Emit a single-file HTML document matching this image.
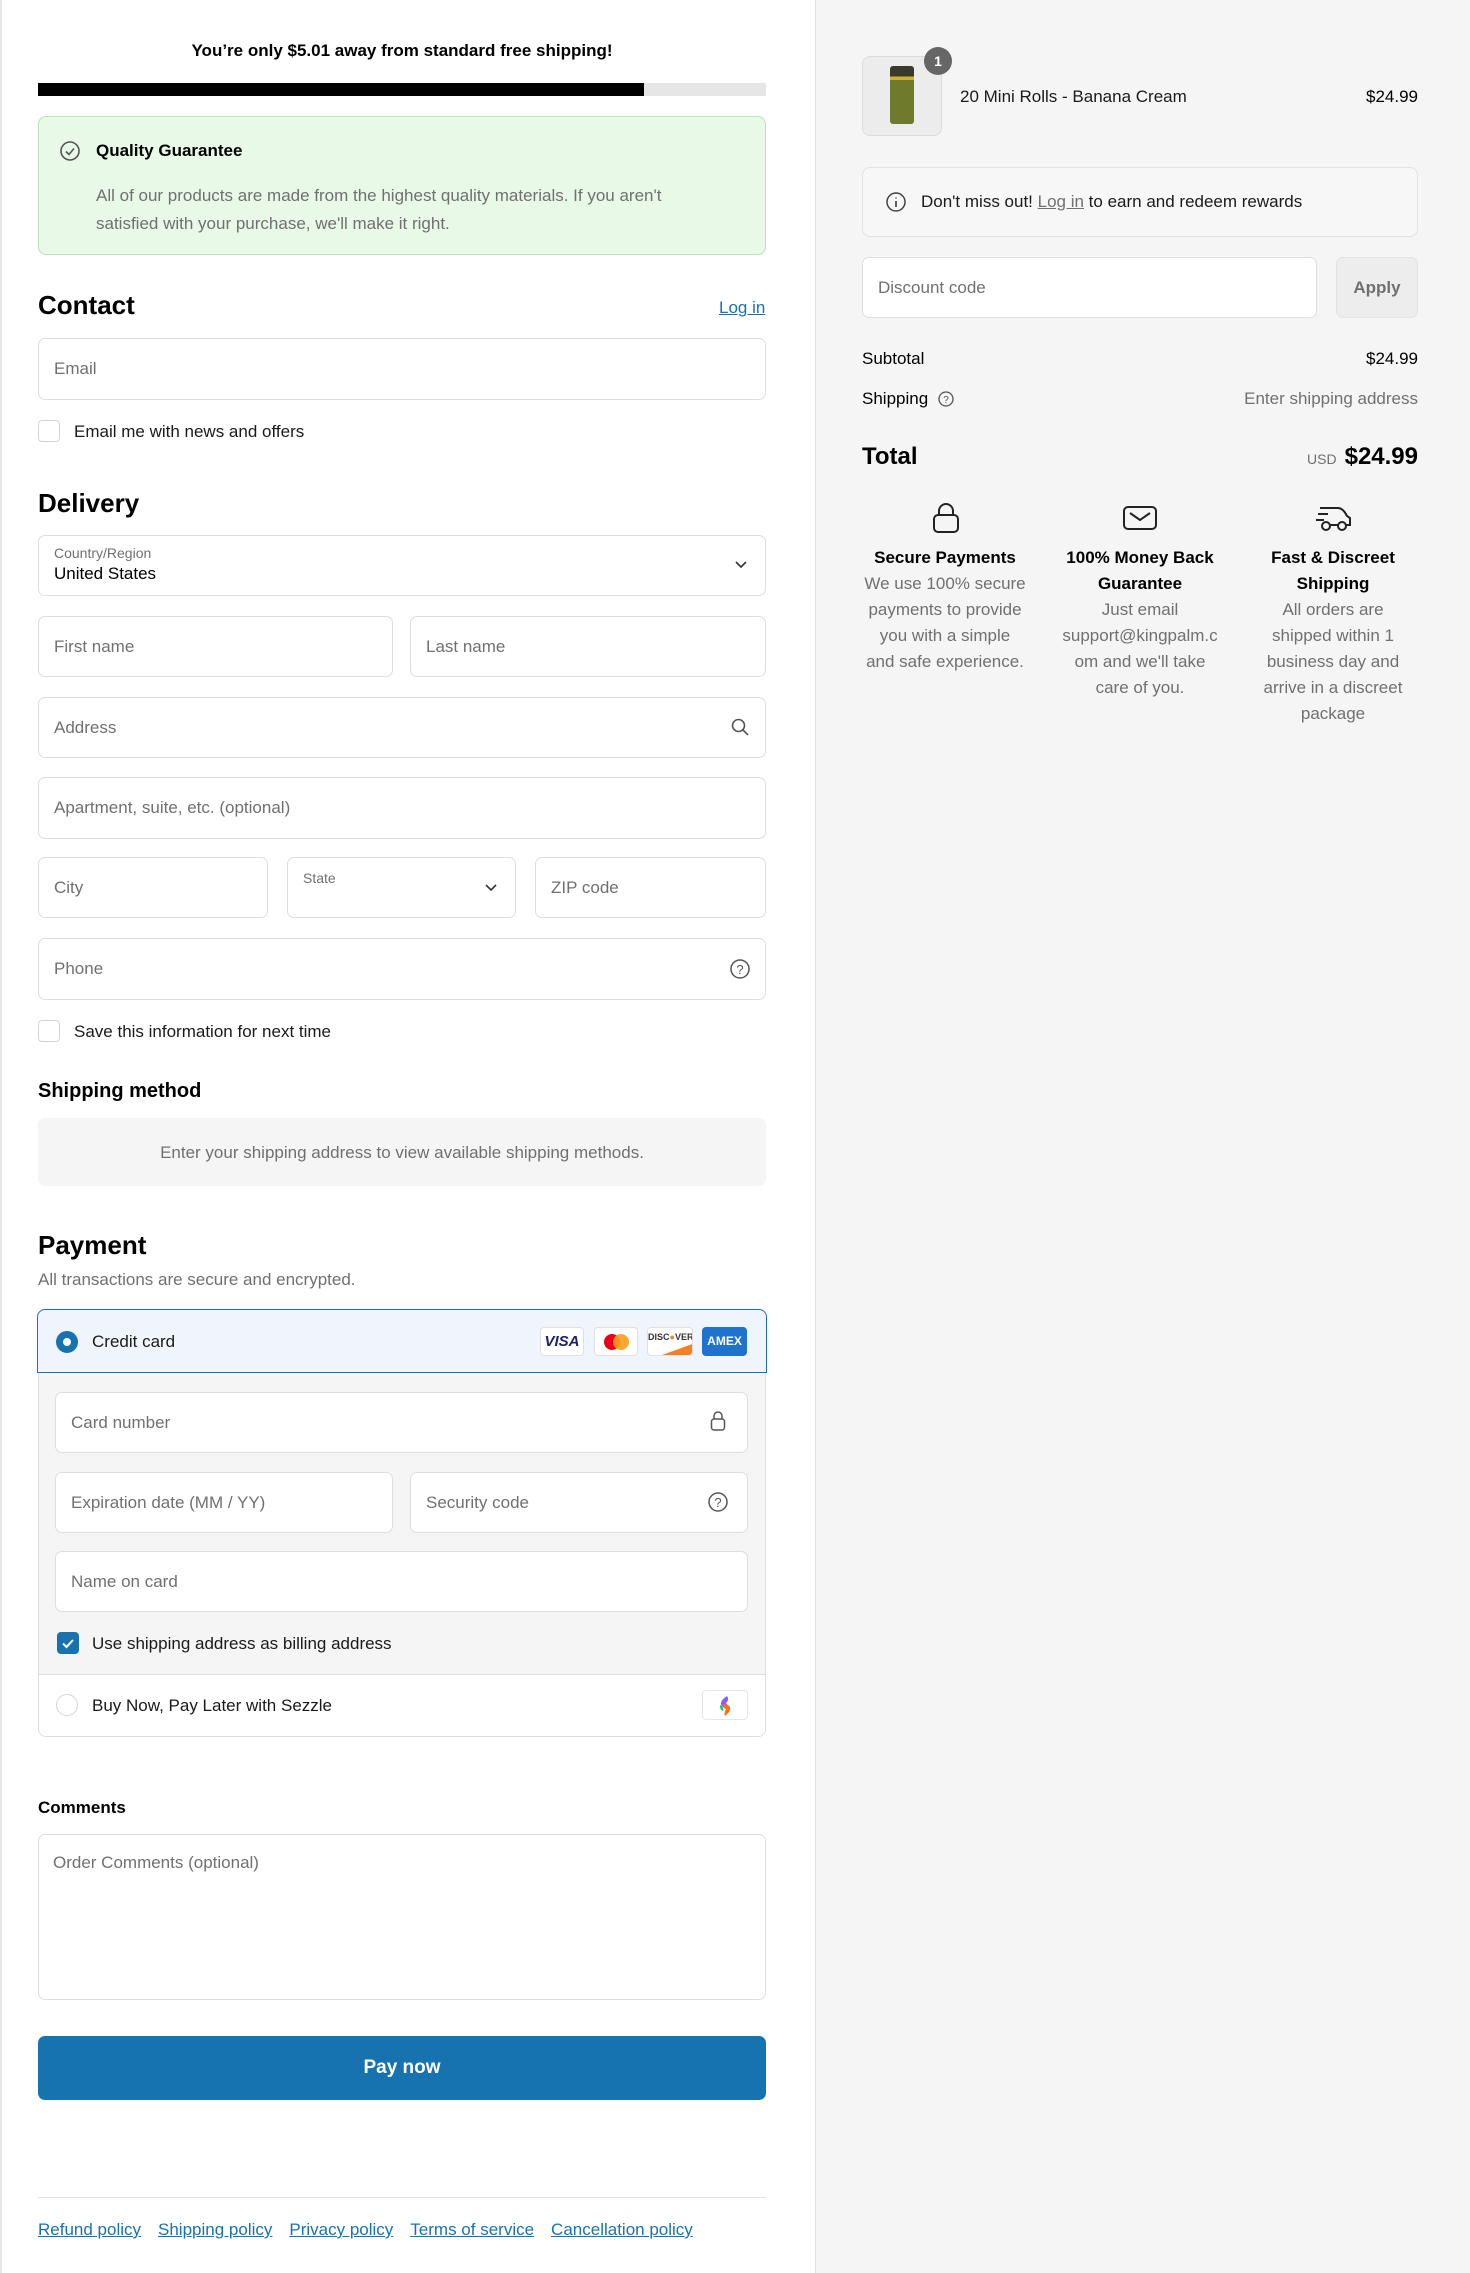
<!DOCTYPE html>
<html><head><meta charset="utf-8">
<style>
*{box-sizing:border-box;margin:0;padding:0}
body{width:1470px;height:2273px;position:relative;background:#fff;font-family:"Liberation Sans",sans-serif;color:#000;overflow:hidden}
.a{position:absolute}
.in{position:absolute;border:1px solid #dedede;border-radius:7px;background:#fff;font-size:17px;color:#707070;display:flex;align-items:center;padding-left:15px}
.lbl{position:absolute;font-size:17px;color:#1a1a1a}
.cb{position:absolute;width:22px;height:22px;border:1px solid #d4d4d4;border-radius:4px;background:#fff}
.h{position:absolute;font-size:26px;font-weight:bold;color:#000}
.lnk{color:#1773b0;text-decoration:underline}
.ic{position:absolute}
.c3{position:absolute;width:190px;text-align:center;white-space:nowrap}
.c3 b{display:block;font-size:17px;color:#000;line-height:26px}
.c3 span{display:block;font-size:17px;color:#707070;line-height:26px}
</style></head><body>
<div class="a" style="left:0;top:0;width:2px;height:2273px;background:#e8e8e8"></div>
<div class="a" style="left:815px;top:0;width:655px;height:2273px;background:#f5f5f5;border-left:1px solid #e2e2e2"></div>

<div class="a" style="left:38px;width:728px;top:41px;text-align:center;font-size:17px;font-weight:bold">You’re only $5.01 away from standard free shipping!</div>
<div class="a" style="left:38px;top:83px;width:728px;height:13px;background:#e6e6e6"></div>
<div class="a" style="left:38px;top:83px;width:606px;height:13px;background:#000"></div>

<div class="a" style="left:38px;top:116px;width:728px;height:139px;background:#e8f9e8;border:1px solid #b6e6b6;border-radius:8px"></div>
<svg class="ic" style="left:59px;top:140px" width="22" height="22" viewBox="0 0 22 22"><circle cx="11" cy="11" r="9" fill="none" stroke="#555" stroke-width="1.6"/><path d="M7 11.5l3 3 5-6" fill="none" stroke="#555" stroke-width="1.6"/></svg>
<div class="a" style="left:96px;top:141px;font-size:17px;font-weight:bold">Quality Guarantee</div>
<div class="a" style="left:96px;top:182px;width:620px;font-size:17px;line-height:28px;color:#707070">All of our products are made from the highest quality materials. If you aren't satisfied with your purchase, we'll make it right.</div>

<div class="h" style="left:38px;top:290px">Contact</div>
<div class="a lnk" style="left:719px;top:298px;font-size:17px">Log in</div>
<div class="in" style="left:38px;top:338px;width:728px;height:62px">Email</div>
<div class="cb" style="left:38px;top:420px"></div>
<div class="lbl" style="left:74px;top:422px">Email me with news and offers</div>

<div class="h" style="left:38px;top:488px">Delivery</div>
<div class="in" style="left:38px;top:535px;width:728px;height:61px;display:block;padding-top:9px"><div style="font-size:14px;color:#707070">Country/Region</div><div style="font-size:17px;color:#000;margin-top:3px">United States</div></div>
<svg class="ic" style="left:734px;top:560px" width="14" height="10"><path d="M2 2l5 5 5-5" fill="none" stroke="#333" stroke-width="1.6"/></svg>
<div class="in" style="left:38px;top:616px;width:355px;height:61px">First name</div>
<div class="in" style="left:410px;top:616px;width:356px;height:61px">Last name</div>
<div class="in" style="left:38px;top:697px;width:728px;height:61px">Address</div>
<svg class="ic" style="left:730px;top:717px" width="20" height="20"><circle cx="8.5" cy="8.5" r="6" fill="none" stroke="#555" stroke-width="1.6"/><path d="M13 13l5 5" stroke="#555" stroke-width="1.6"/></svg>
<div class="in" style="left:38px;top:777px;width:728px;height:62px">Apartment, suite, etc. (optional)</div>
<div class="in" style="left:38px;top:857px;width:230px;height:61px">City</div>
<div class="in" style="left:287px;top:857px;width:229px;height:61px;align-items:flex-start;padding-top:12px;font-size:14px">State</div>
<svg class="ic" style="left:484px;top:883px" width="14" height="10"><path d="M2 2l5 5 5-5" fill="none" stroke="#333" stroke-width="1.6"/></svg>
<div class="in" style="left:535px;top:857px;width:231px;height:61px">ZIP code</div>
<div class="in" style="left:38px;top:938px;width:728px;height:62px">Phone</div>
<svg class="ic" style="left:729px;top:958px" width="22" height="22"><circle cx="11" cy="11" r="9" fill="none" stroke="#555" stroke-width="1.5"/><text x="11" y="16" font-size="13" text-anchor="middle" fill="#555" font-family="Liberation Sans">?</text></svg>
<div class="cb" style="left:38px;top:1020px"></div>
<div class="lbl" style="left:74px;top:1022px">Save this information for next time</div>

<div class="a" style="left:38px;top:1080px;font-size:20px;font-weight:bold">Shipping method</div>
<div class="a" style="left:38px;top:1118px;width:728px;height:68px;background:#f5f5f5;border-radius:7px;text-align:center;line-height:70px;font-size:17px;color:#707070">Enter your shipping address to view available shipping methods.</div>

<div class="h" style="left:38px;top:1230px">Payment</div>
<div class="a" style="left:38px;top:1270px;font-size:17px;color:#707070">All transactions are secure and encrypted.</div>

<div class="a" style="left:38px;top:1309px;width:728px;height:428px;border:1px solid #dedede;border-radius:8px;background:#f5f5f5;overflow:hidden">
 <div class="a" style="left:0;top:364px;width:728px;height:64px;background:#fff;border-top:1px solid #dedede"></div>
</div>
<div class="a" style="left:37px;top:1309px;width:730px;height:64px;background:#f0f5fd;border:1.5px solid #1773b0;border-radius:8px 8px 0 0"></div>
<div class="a" style="left:56px;top:1331px;width:22px;height:22px;border-radius:50%;border:7px solid #1773b0;background:#fff"></div>
<div class="lbl" style="left:92px;top:1332px">Credit card</div>
<div class="a" style="left:540px;top:1327px;width:44px;height:29px;background:#fff;border:1px solid #e0e0e0;border-radius:4px;text-align:center;font:italic bold 15px/27px 'Liberation Sans';color:#1a1f71">VISA</div>
<div class="a" style="left:594px;top:1327px;width:44px;height:29px;background:#fff;border:1px solid #e0e0e0;border-radius:4px"><div class="a" style="left:9px;top:6px;width:16px;height:16px;border-radius:50%;background:#eb001b"></div><div class="a" style="left:18px;top:6px;width:16px;height:16px;border-radius:50%;background:#f79e1b;opacity:.9"></div></div>
<div class="a" style="left:647px;top:1327px;width:46px;height:29px;background:#fff;border:1px solid #e0e0e0;border-radius:4px;overflow:hidden;font:bold 9px/18px 'Liberation Sans';text-align:center;color:#333">DISC<span style="color:#f58220">●</span>VER<div class="a" style="left:10px;top:18px;width:60px;height:14px;background:#f58220;transform:rotate(-20deg)"></div></div>
<div class="a" style="left:702px;top:1327px;width:45px;height:29px;background:#1f72cd;border-radius:4px;text-align:center;font:bold 12px/29px 'Liberation Sans';color:#fff">AMEX</div>

<div class="in" style="left:55px;top:1392px;width:693px;height:61px">Card number</div>
<svg class="ic" style="left:709px;top:1410px" width="18" height="22"><rect x="2.5" y="9" width="13" height="11" rx="2.5" fill="none" stroke="#555" stroke-width="1.5"/><path d="M5 9V6a4 4 0 0 1 8 0v3" fill="none" stroke="#555" stroke-width="1.5"/></svg>
<div class="in" style="left:55px;top:1472px;width:338px;height:61px">Expiration date (MM / YY)</div>
<div class="in" style="left:410px;top:1472px;width:338px;height:61px">Security code</div>
<svg class="ic" style="left:707px;top:1491px" width="22" height="22"><circle cx="11" cy="11" r="9" fill="none" stroke="#555" stroke-width="1.5"/><text x="11" y="16" font-size="13" text-anchor="middle" fill="#555" font-family="Liberation Sans">?</text></svg>
<div class="in" style="left:55px;top:1551px;width:693px;height:61px">Name on card</div>
<div class="a" style="left:57px;top:1632px;width:22px;height:22px;border-radius:4px;background:#1773b0"><svg width="22" height="22"><path d="M6 11.5l3.5 3.5 6.5-7" fill="none" stroke="#fff" stroke-width="2"/></svg></div>
<div class="lbl" style="left:92px;top:1634px">Use shipping address as billing address</div>
<div class="a" style="left:56px;top:1694px;width:22px;height:22px;border-radius:50%;border:1px solid #d4d4d4;background:#fff"></div>
<div class="lbl" style="left:92px;top:1696px">Buy Now, Pay Later with Sezzle</div>
<div class="a" style="left:702px;top:1690px;width:46px;height:30px;background:#fff;border:1px solid #e6e6e6;border-radius:4px"><svg width="46" height="30"><path d="M24 5c-6 4-8 8-4 11l4 3c2-3 1-5-1-7 2-2 3-4 1-7z" fill="#8b5cf6"/><path d="M20 13c5 0 8 2 7 6-1 3-4 5-5 6-1-3 0-5 1-7-2-1-3-3-3-5z" fill="#f97316"/><path d="M17 14c2 1 4 3 3 6l-2-1c-1-2-1-3-1-5z" fill="#22c55e"/></svg></div>

<div class="a" style="left:38px;top:1798px;font-size:17px;font-weight:bold">Comments</div>
<div class="a" style="left:38px;top:1834px;width:728px;height:166px;border:1px solid #dedede;border-radius:7px;padding:18px 14px;font-size:17px;color:#707070">Order Comments (optional)</div>
<div class="a" style="left:38px;top:2036px;width:728px;height:64px;background:#1773b0;border-radius:7px;color:#fff;font-size:19px;font-weight:bold;text-align:center;line-height:64px">Pay now</div>
<div class="a" style="left:38px;top:2197px;width:728px;height:1px;background:#e2e2e2"></div>
<div class="a" style="left:38px;top:2220px;font-size:17px;word-spacing:0"><span class="lnk">Refund policy</span><span style="display:inline-block;width:17px"></span><span class="lnk">Shipping policy</span><span style="display:inline-block;width:17px"></span><span class="lnk">Privacy policy</span><span style="display:inline-block;width:17px"></span><span class="lnk">Terms of service</span><span style="display:inline-block;width:17px"></span><span class="lnk">Cancellation policy</span></div>

<!-- right -->
<div class="a" style="left:862px;top:56px;width:80px;height:80px;border:1px solid #dcdcdc;border-radius:8px;background:#ececec"></div>
<div class="a" style="left:890px;top:66px;width:24px;height:58px;background:linear-gradient(#3a3a2a 0 18%,#c9b23a 18% 24%,#6f7a2c 24% 100%);border-radius:3px"></div>
<div class="a" style="left:924px;top:47px;width:28px;height:28px;border-radius:50%;background:#666;color:#fff;font-size:14px;font-weight:bold;text-align:center;line-height:28px">1</div>
<div class="a" style="left:960px;top:87px;font-size:17px;color:#1a1a1a">20 Mini Rolls - Banana Cream</div>
<div class="a" style="left:1300px;width:118px;text-align:right;top:87px;font-size:17px">$24.99</div>

<div class="a" style="left:862px;top:167px;width:556px;height:70px;border:1px solid #e2e2e2;border-radius:8px;background:#f7f7f7"></div>
<svg class="ic" style="left:885px;top:191px" width="22" height="22"><circle cx="11" cy="11" r="9" fill="none" stroke="#444" stroke-width="1.5"/><path d="M11 10v6M11 6.5v1" stroke="#444" stroke-width="1.7"/></svg>
<div class="a" style="left:921px;top:192px;font-size:17px;color:#1a1a1a">Don't miss out! <span style="text-decoration:underline;color:#707070">Log in</span> to earn and redeem rewards</div>

<div class="in" style="left:862px;top:257px;width:455px;height:61px">Discount code</div>
<div class="a" style="left:1336px;top:257px;width:82px;height:61px;border:1px solid #e2e2e2;border-radius:7px;background:#ededed;text-align:center;line-height:59px;font-size:17px;color:#707070;font-weight:bold">Apply</div>

<div class="a" style="left:862px;top:349px;font-size:17px">Subtotal</div>
<div class="a" style="left:1300px;width:118px;text-align:right;top:349px;font-size:17px">$24.99</div>
<div class="a" style="left:862px;top:389px;font-size:17px">Shipping</div>
<svg class="ic" style="left:937px;top:390px" width="18" height="18"><circle cx="9" cy="9" r="7" fill="none" stroke="#555" stroke-width="1.3"/><text x="9" y="13" font-size="10" text-anchor="middle" fill="#555" font-family="Liberation Sans">?</text></svg>
<div class="a" style="left:1100px;width:318px;text-align:right;top:389px;font-size:17px;color:#707070">Enter shipping address</div>
<div class="a" style="left:862px;top:443px;font-size:24px;font-weight:bold">Total</div>
<div class="a" style="left:1100px;width:318px;text-align:right;top:443px;font-size:24px;font-weight:bold"><span style="font-size:14px;color:#707070;font-weight:normal;margin-right:8px">USD</span>$24.99</div>

<svg class="ic" style="left:931px;top:502px" width="30" height="32"><rect x="3" y="13" width="24" height="17" rx="4" fill="none" stroke="#222" stroke-width="2"/><path d="M8 13V9a7 7 0 0 1 14 0v4" fill="none" stroke="#222" stroke-width="2"/></svg>
<svg class="ic" style="left:1122px;top:504px" width="36" height="28"><rect x="2" y="3" width="32" height="22" rx="4" fill="none" stroke="#222" stroke-width="2"/><path d="M8 9l10 7 10-7" fill="none" stroke="#222" stroke-width="2"/></svg>
<svg class="ic" style="left:1314px;top:502px" width="40" height="32"><path d="M6 6h18c4 0 7 4 9 8l3 2v7h-4M4 12h10M2 18h8M16 23h8" fill="none" stroke="#222" stroke-width="2"/><circle cx="12" cy="24" r="4" fill="none" stroke="#222" stroke-width="2"/><circle cx="28" cy="24" r="4" fill="none" stroke="#222" stroke-width="2"/></svg>
<div class="c3" style="left:850px;top:545px"><b>Secure Payments</b><span>We use 100% secure<br>payments to provide<br>you with a simple<br>and safe experience.</span></div>
<div class="c3" style="left:1045px;top:545px"><b>100% Money Back<br>Guarantee</b><span>Just email<br>support@kingpalm.c<br>om and we'll take<br>care of you.</span></div>
<div class="c3" style="left:1238px;top:545px"><b>Fast &amp; Discreet<br>Shipping</b><span>All orders are<br>shipped within 1<br>business day and<br>arrive in a discreet<br>package</span></div>
</body></html>
